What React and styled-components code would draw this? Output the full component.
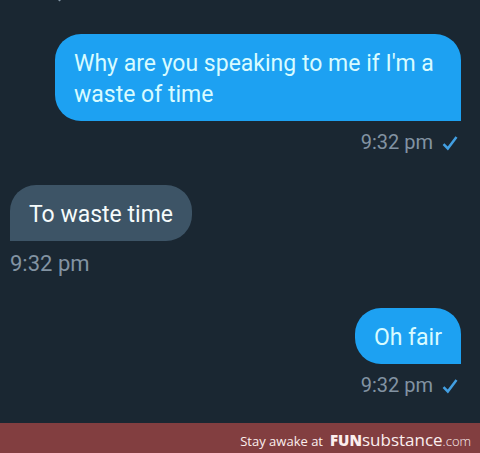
import React from "react";
import styled, { createGlobalStyle } from "styled-components";

const GlobalStyle = createGlobalStyle`
  * { box-sizing: border-box; }
  body { margin: 0; background: #1a2732; }
`;

const Page = styled.div`
  min-height: 100vh;
  display: flex;
  flex-direction: column;
  background: #1a2732;
  font-family: Roboto, sans-serif;
`;

const Remnant = styled.svg`
  display: block;
  width: 4px;
  height: 2px;
  margin-left: 58px;
`;

const Thread = styled.main`
  flex: 1;
  display: flex;
  flex-direction: column;
  gap: 29px;
  padding: 32px 19px 20px 10px;
`;

const Message = styled.article`
  display: flex;
  flex-direction: column;
  gap: 8px;
  align-items: ${(p) => (p.$sent ? "flex-end" : "flex-start")};
`;

const Bubble = styled.p`
  margin: 0;
  max-width: 406px;
  padding: 14px 19px 11px;
  border-radius: ${(p) => (p.$sent ? "26px 26px 0 26px" : "26px 26px 26px 0")};
  background: ${(p) => (p.$sent ? "#1da1f2" : "#3d5466")};
  color: ${(p) => (p.$sent ? "#d8fbff" : "#f5fbfb")};
  font-size: 23px;
  line-height: 31px;
`;

const Meta = styled.div`
  display: flex;
  align-items: center;
  gap: 9px;
  padding-right: ${(p) => (p.$sent ? 3 : 0)}px;
  color: #8293a2;
  font-size: ${(p) => (p.$sent ? 20 : 22)}px;
  line-height: ${(p) => (p.$sent ? 27 : 30)}px;
`;

const Check = styled.svg`
  width: 16px;
  height: 16px;
  fill: none;
  stroke: #429fe2;
  stroke-width: 2.5;
`;

const Footer = styled.footer`
  display: flex;
  align-items: baseline;
  justify-content: flex-end;
  gap: 7px;
  height: 30px;
  padding: 0 9px;
  background: #823e40;
  color: #fbeeee;
  font-family: "Open Sans", "Noto Sans", sans-serif;
  font-size: 13px;
  font-weight: 500;
  line-height: 34px;
  white-space: nowrap;
`;

const Site = styled.a`
  color: inherit;
  text-decoration: none;
  font-size: 17px;
`;

const Fun = styled.b`
  font-size: 15px;
  font-weight: 800;
`;

const Domain = styled.span`
  font-size: 13px;
  font-weight: 300;
`;

const messages = [
  { sent: true, text: "Why are you speaking to me if I'm a waste of time", time: "9:32 pm" },
  { sent: false, text: "To waste time", time: "9:32 pm" },
  { sent: true, text: "Oh fair", time: "9:32 pm" },
];

export default function App() {
  return (
    <Page>
      <GlobalStyle />
      <Remnant viewBox="0 0 4 2" aria-hidden="true">
        <path d="M0 0h3L1.5 1.5z" fill="#8295a4" />
      </Remnant>
      <Thread>
        {messages.map((m, i) => (
          <Message key={i} $sent={m.sent}>
            <Bubble $sent={m.sent}>{m.text}</Bubble>
            <Meta $sent={m.sent}>
              <time>{m.time}</time>
              {m.sent && (
                <Check viewBox="0 0 16 16" role="img" aria-label="Delivered">
                  <path d="M1.5 9.2 5.8 13.5 14.5 2" />
                </Check>
              )}
            </Meta>
          </Message>
        ))}
      </Thread>
      <Footer>
        <span>Stay awake at</span>
        <Site href="#">
          <Fun>FUN</Fun>substance<Domain>.com</Domain>
        </Site>
      </Footer>
    </Page>
  );
}
